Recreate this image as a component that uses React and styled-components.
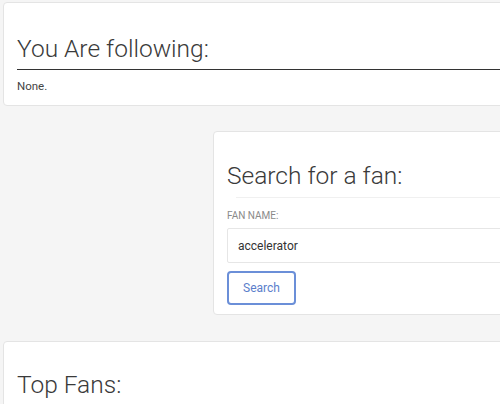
import React, { useState } from "react";
import styled, { createGlobalStyle } from "styled-components";

const GlobalStyle = createGlobalStyle`
  html, body {
    margin: 0;
    padding: 0;
    background: #f5f5f5;
    font-family: Roboto, "Liberation Sans", sans-serif;
    color: #333;
  }
  #root {
    overflow: hidden;
    width: 500px;
    height: 404px;
  }
`;

const Page = styled.div`
  display: flex;
  flex-direction: column;
  padding: 2px 0 0 3px;
  width: 700px;
`;

const Card = styled.section`
  background: #fff;
  border: 1px solid #e4e4e4;
  border-radius: 4px;
  box-sizing: border-box;
  margin-left: ${(p) => p.$offset || 0}px;
  margin-bottom: ${(p) => p.$gap || 0}px;
  padding: ${(p) => p.$pad || "0 13px"};
  width: ${(p) => p.$width || 640}px;
  min-height: ${(p) => p.$height || 0}px;
`;

const Title = styled.h2`
  margin: 0;
  font-weight: 300;
  font-size: 24.5px;
  line-height: 30px;
  color: #3a3a3a;
  padding-bottom: ${(p) => p.$below || 0}px;
  border-bottom: ${(p) => (p.$rule ? "1.5px solid #333" : "none")};
`;

const Note = styled.p`
  margin: 0;
  padding: 10px 0 12px;
  font-size: 11.5px;
  line-height: 13px;
  color: #444;
`;

const FaintRule = styled.div`
  height: 1px;
  background: #f0f0f0;
  margin: 6px 0 0 9px;
`;

const Label = styled.label`
  display: block;
  margin-top: 12px;
  font-size: 10px;
  line-height: 12px;
  color: #8a8a8a;
  text-transform: uppercase;
`;

const Input = styled.input`
  display: block;
  box-sizing: border-box;
  margin-top: 6px;
  width: 100%;
  height: 35px;
  border: 1px solid #e6e6e6;
  border-radius: 2px;
  padding: 0 10px;
  font-family: Roboto, "Liberation Sans", sans-serif;
  font-size: 12px;
  color: #333;
  outline: none;
`;

const Button = styled.button`
  display: block;
  margin-top: 8px;
  width: 69px;
  height: 34px;
  box-sizing: border-box;
  border: 2px solid #6b8fd8;
  border-radius: 4px;
  background: #fff;
  color: #5b7ecb;
  font-family: Roboto, "Liberation Sans", sans-serif;
  font-size: 12px;
  cursor: pointer;
`;

export default function App() {
  const [name, setName] = useState("accelerator");
  return (
    <>
      <GlobalStyle />
      <Page>
        <Card $gap={25} $pad="31px 13px 0">
          <Title $rule $below={5}>You Are following:</Title>
          <Note>None.</Note>
        </Card>
        <Card $offset={210} $gap={26} $pad="29px 13px 9px" $width={420}>
          <Title>Search for a fan:</Title>
          <FaintRule />
          <Label>Fan name:</Label>
          <Input value={name} onChange={(e) => setName(e.target.value)} />
          <Button>Search</Button>
        </Card>
        <Card $pad="28px 13px 0" $height={80}>
          <Title>Top Fans:</Title>
        </Card>
      </Page>
    </>
  );
}
